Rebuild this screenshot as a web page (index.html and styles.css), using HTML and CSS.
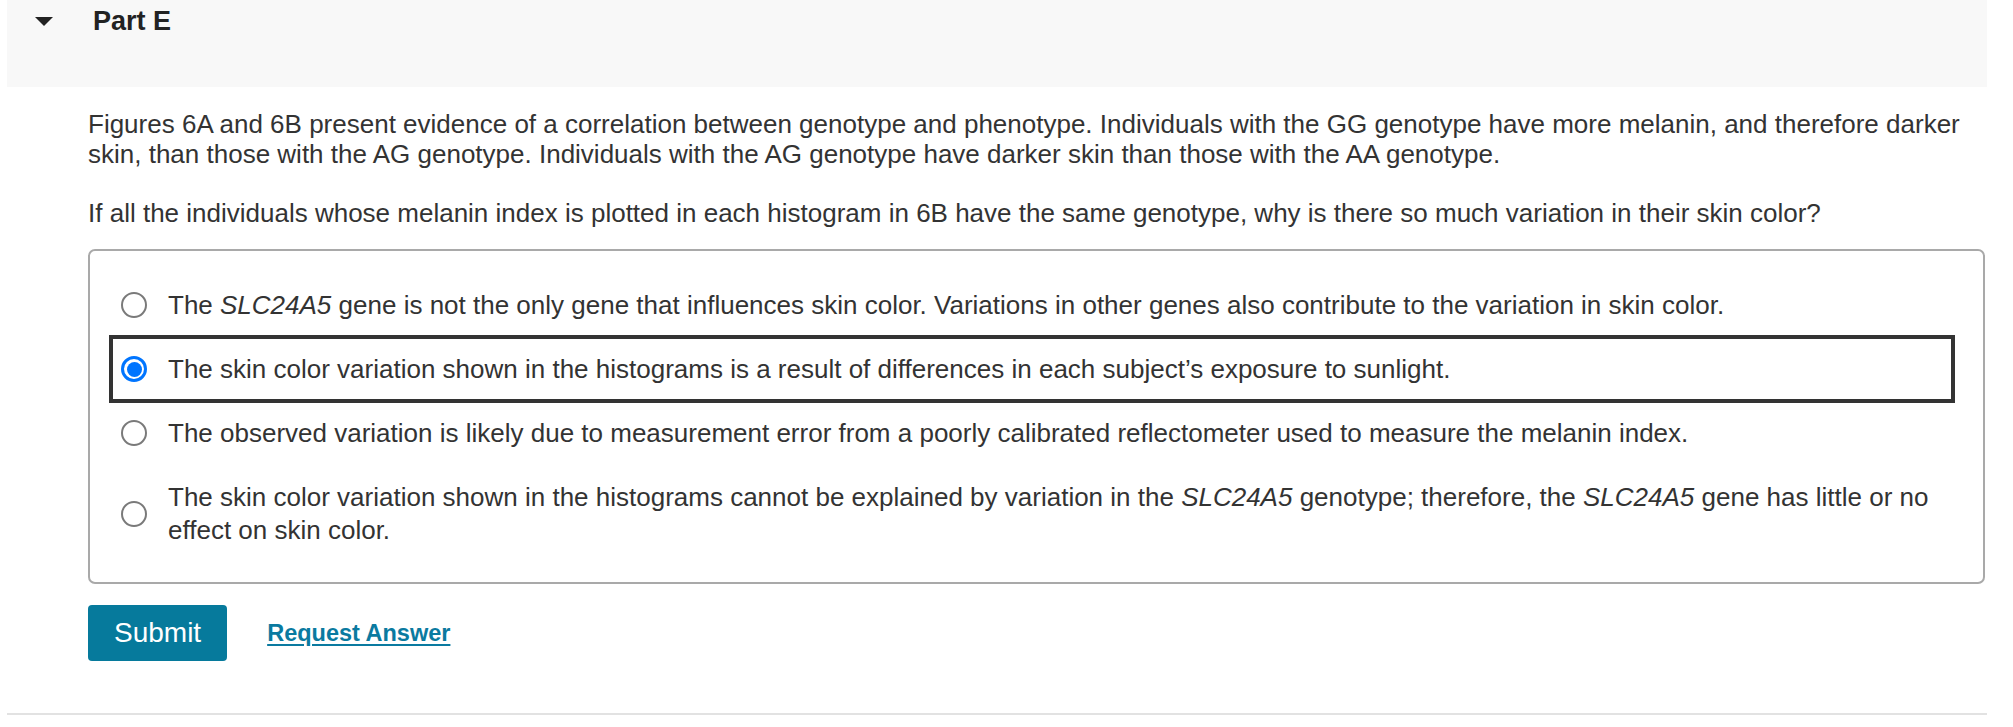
FILE: index.html
```html
<!DOCTYPE html>
<html>
<head>
<meta charset="utf-8">
<link rel="stylesheet" href="styles.css">
</head>
<body>
<div class="part">
  <div class="part-header">
    <svg class="caret" width="18" height="9" viewBox="0 0 18 9"><path d="M0 0 L18 0 L9 9 Z" fill="#222"/></svg>
    <h2 class="part-title">Part E</h2>
  </div>
  <div class="part-body">
    <p class="text">Figures 6A and 6B present evidence of a correlation between genotype and phenotype. Individuals with the GG genotype have more melanin, and therefore darker skin, than those with the AG genotype. Individuals with the AG genotype have darker skin than those with the AA genotype.</p>
    <p class="text">If all the individuals whose melanin index is plotted in each histogram in 6B have the same genotype, why is there so much variation in their skin color?</p>
    <div class="choices">
      <label class="choice">
        <span class="radio"></span>
        <span class="choice-text">The <i>SLC24A5</i> gene is not the only gene that influences skin color. Variations in other genes also contribute to the variation in skin color.</span>
      </label>
      <label class="choice selected">
        <span class="radio checked"></span>
        <span class="choice-text">The skin color variation shown in the histograms is a result of differences in each subject’s exposure to sunlight.</span>
      </label>
      <label class="choice">
        <span class="radio"></span>
        <span class="choice-text">The observed variation is likely due to measurement error from a poorly calibrated reflectometer used to measure the melanin index.</span>
      </label>
      <label class="choice">
        <span class="radio"></span>
        <span class="choice-text">The skin color variation shown in the histograms cannot be explained by variation in the <i>SLC24A5</i> genotype; therefore, the <i>SLC24A5</i> gene has little or no effect on skin color.</span>
      </label>
    </div>
    <div class="actions">
      <button class="submit">Submit</button>
      <a class="request" href="#">Request Answer</a>
    </div>
  </div>
  <div class="divider"></div>
</div>
</body>
</html>
```

FILE: styles.css
```css
html, body {
  margin: 0;
  padding: 0;
  background: #ffffff;
}
body {
  font-family: "Liberation Sans", Arial, sans-serif;
  color: #333333;
}
.part {
  margin-left: 7px;
  width: 1980px;
}
.part-header {
  height: 87px;
  background: #f8f8f8;
  display: flex;
  align-items: flex-start;
  box-sizing: border-box;
  padding-top: 6px;
}
.caret {
  display: block;
  margin-left: 28px;
  margin-top: 11px;
}
.part-title {
  margin: 0 0 0 40px;
  font-size: 27px;
  line-height: 30px;
  font-weight: bold;
  color: #222222;
}
.part-body {
  padding: 22px 2px 0 81px;
}
.text {
  margin: 0 0 29px 0;
  font-size: 26px;
  line-height: 30px;
}
.text + .text {
  margin-bottom: 21px;
}
.choices {
  border: 2px solid #a9a9a9;
  border-radius: 7px;
  padding: 22px 0 20px 0;
}
.choice {
  display: flex;
  align-items: center;
  margin: 0 30px 0 21px;
  padding: 15.5px 10px;
  font-size: 26px;
  line-height: 33px;
  cursor: pointer;
}
.choice.selected {
  outline: 4px solid #333333;
  outline-offset: -2px;
}
.radio {
  flex: none;
  width: 26px;
  height: 26px;
  box-sizing: border-box;
  border: 2px solid #7a7a7a;
  border-radius: 50%;
  background: #fff;
  position: relative;
}
.radio.checked {
  border: 3px solid #0075ff;
}
.radio.checked::after {
  content: "";
  position: absolute;
  left: 2.5px;
  top: 2.5px;
  width: 15px;
  height: 15px;
  border-radius: 50%;
  background: #0075ff;
}
.choice-text {
  margin-left: 21px;
}
.actions {
  display: flex;
  align-items: center;
  margin-top: 21px;
}
.submit {
  height: 56px;
  padding: 0 26px;
  border: none;
  border-radius: 4px;
  background: #067a9c;
  color: #ffffff;
  font-family: "Liberation Sans", Arial, sans-serif;
  font-size: 28px;
  line-height: 56px;
}
.request {
  margin-left: 40px;
  font-size: 23.5px;
  font-weight: bold;
  color: #0a7aa0;
  text-decoration: underline;
  text-underline-offset: 3px;
}
.divider {
  margin-top: 52px;
  height: 2px;
  background: #e2e2e2;
}
```
